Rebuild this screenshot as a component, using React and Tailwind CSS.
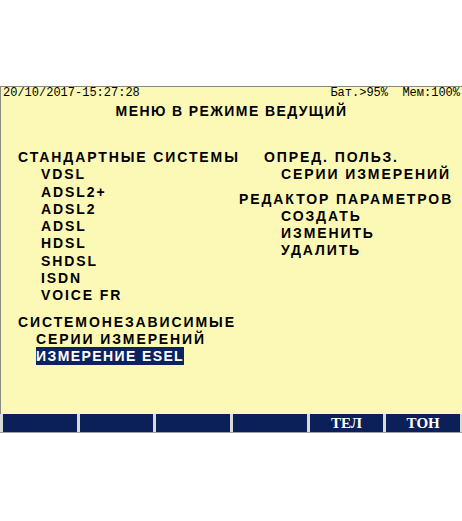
export default function App() {
  const standards = ["VDSL", "ADSL2+", "ADSL2", "ADSL", "HDSL", "SHDSL", "ISDN", "VOICE FR"];
  const keys = ["", "", "", "", "ТЕЛ", "ТОН"];

  return (
    <div className="w-[462px] h-[521px] bg-white pt-[86px] overflow-hidden">
      <div className="border-t border-l border-[#8a8a80] bg-[#fcf9b6] h-[328px] flex flex-col font-['Liberation_Sans',sans-serif] text-black">
        {/* status line */}
        <div className="flex justify-between px-[2px] h-[12px] leading-[12px] text-[12px] font-['Liberation_Mono',monospace] whitespace-pre">
          <span>20/10/2017-15:27:28</span>
          <span>Бат.&gt;95%  Мем:100%</span>
        </div>
        <div className="text-center mt-[4px] text-[14px] leading-[16px] font-bold tracking-[1.4px]">
          МЕНЮ В РЕЖИМЕ ВЕДУЩИЙ
        </div>

        <div className="flex mt-[30px] text-[14px] font-bold tracking-[1.9px] leading-[17.3px] whitespace-nowrap">
          {/* left column */}
          <div className="pl-[17px] w-[238px] shrink-0 flex flex-col">
            <div>СТАНДАРТНЫЕ СИСТЕМЫ</div>
            {standards.map((s) => (
              <div key={s} className="pl-[23px]">{s}</div>
            ))}
            <div className="mt-[9px]">СИСТЕМОНЕЗАВИСИМЫЕ</div>
            <div className="pl-[18px]">СЕРИИ ИЗМЕРЕНИЙ</div>
            <div className="pl-[18px]">
              <span className="bg-[#0d2360] text-white tracking-[1.4px] py-[1px]">ИЗМЕРЕНИЕ ESEL</span>
            </div>
          </div>

          {/* right column */}
          <div className="flex flex-col">
            <div className="pl-[25px]">ОПРЕД. ПОЛЬЗ.</div>
            <div className="pl-[42px]">СЕРИИ ИЗМЕРЕНИЙ</div>
            <div className="mt-[7px]">РЕДАКТОР ПАРАМЕТРОВ</div>
            <div className="pl-[42px]">СОЗДАТЬ</div>
            <div className="pl-[42px]">ИЗМЕНИТЬ</div>
            <div className="pl-[42px]">УДАЛИТЬ</div>
          </div>
        </div>
      </div>

      {/* soft keys */}
      <div className="flex h-[19px] bg-[#d8dcd8] border-b border-[#9aa0a0] pl-[3px] gap-[3px] pr-[2px]">
        {keys.map((k, i) => (
          <div
            key={i}
            className="flex-1 bg-[#0b1f58] text-white font-['Liberation_Serif',serif] font-bold text-[15px] leading-[19px] text-center"
          >
            {k}
          </div>
        ))}
      </div>
    </div>
  );
}
